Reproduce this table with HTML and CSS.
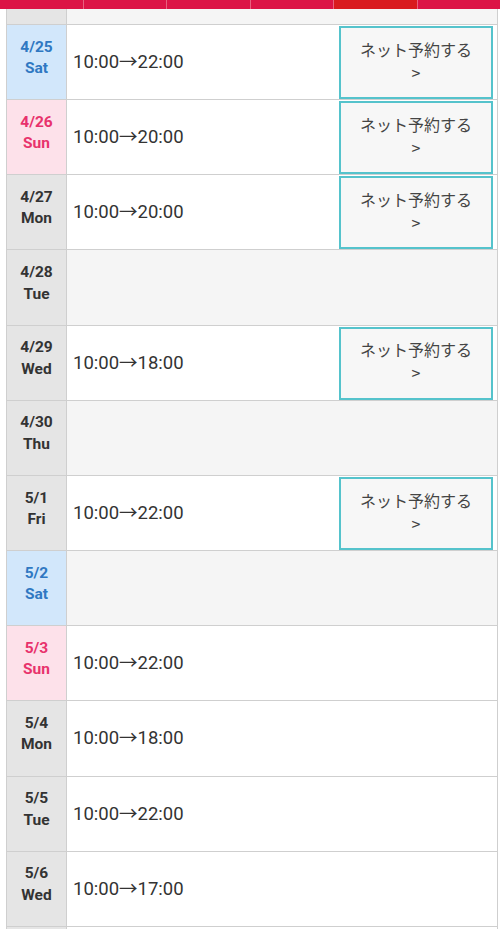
FILE: index.html
```html
<!DOCTYPE html>
<html lang="ja">
<head>
<meta charset="utf-8">
<title>営業日カレンダー</title>
<link rel="stylesheet" href="styles.css">
</head>
<body>
<div class="tabs">
  <span class="tab"></span>
  <span class="tab"></span>
  <span class="tab"></span>
  <span class="tab"></span>
  <span class="tab active"></span>
  <span class="tab"></span>
</div>
<div class="schedule">
  <div class="row partial closed">
    <div class="date wd"></div>
    <div class="body"></div>
  </div>
  <div class="row">
    <div class="date sat">4/25<br>Sat</div>
    <div class="body"><span class="time">10:00→22:00</span><a class="reserve">ネット予約する<br>&gt;</a></div>
  </div>
  <div class="row">
    <div class="date sun">4/26<br>Sun</div>
    <div class="body"><span class="time">10:00→20:00</span><a class="reserve">ネット予約する<br>&gt;</a></div>
  </div>
  <div class="row">
    <div class="date wd">4/27<br>Mon</div>
    <div class="body"><span class="time">10:00→20:00</span><a class="reserve">ネット予約する<br>&gt;</a></div>
  </div>
  <div class="row closed">
    <div class="date wd">4/28<br>Tue</div>
    <div class="body"></div>
  </div>
  <div class="row">
    <div class="date wd">4/29<br>Wed</div>
    <div class="body"><span class="time">10:00→18:00</span><a class="reserve">ネット予約する<br>&gt;</a></div>
  </div>
  <div class="row closed">
    <div class="date wd">4/30<br>Thu</div>
    <div class="body"></div>
  </div>
  <div class="row">
    <div class="date wd">5/1<br>Fri</div>
    <div class="body"><span class="time">10:00→22:00</span><a class="reserve">ネット予約する<br>&gt;</a></div>
  </div>
  <div class="row closed">
    <div class="date sat">5/2<br>Sat</div>
    <div class="body"></div>
  </div>
  <div class="row">
    <div class="date sun">5/3<br>Sun</div>
    <div class="body"><span class="time">10:00→22:00</span></div>
  </div>
  <div class="row">
    <div class="date wd">5/4<br>Mon</div>
    <div class="body"><span class="time">10:00→18:00</span></div>
  </div>
  <div class="row">
    <div class="date wd">5/5<br>Tue</div>
    <div class="body"><span class="time">10:00→22:00</span></div>
  </div>
  <div class="row">
    <div class="date wd">5/6<br>Wed</div>
    <div class="body"><span class="time">10:00→17:00</span></div>
  </div>
  <div class="row">
    <div class="date wd"></div>
    <div class="body"></div>
  </div>
</div>
</body>
</html>
```
FILE: styles.css
```css
html, body {
  margin: 0;
  padding: 0;
  background: #ffffff;
}
body {
  font-family: Roboto, "Noto Sans CJK JP", "Noto Sans", sans-serif;
  color: #333333;
  overflow: hidden;
  height: 929px;
}
.tabs {
  display: flex;
  height: 9px;
  background: #dc1446;
}
.tab {
  flex: 1;
  background: #dc1446;
  border-left: 1px solid #e8607e;
}
.tab:first-child {
  border-left: none;
}
.tab.active {
  background: #d91b1f;
}
.schedule {
  margin: 0 2px 0 6px;
  border-left: 1px solid #cfcfcf;
  border-right: 1px solid #cfcfcf;
}
.row {
  display: flex;
  box-sizing: border-box;
  height: 75.17px;
  border-bottom: 1px solid #cfcfcf;
}
.row.partial {
  height: 16px;
}
.date {
  box-sizing: border-box;
  width: 60px;
  flex: none;
  border-right: 1px solid #cfcfcf;
  display: flex;
  align-items: center;
  justify-content: center;
  text-align: center;
  font-weight: 700;
  font-size: 15.5px;
  line-height: 21.5px;
  padding-bottom: 8px;
}
.date.wd {
  background: #e5e5e5;
  color: #333333;
}
.date.sat {
  background: #d2e7fb;
  color: #2f78c2;
}
.date.sun {
  background: #fde1ea;
  color: #e8326c;
}
.body {
  flex: 1;
  display: flex;
  align-items: center;
  justify-content: space-between;
  background: #ffffff;
  padding-left: 6px;
}
.row.closed .body {
  background: #f5f5f5;
}
.time {
  font-size: 18.5px;
  color: #333333;
  padding-bottom: 4px;
}
.reserve {
  align-self: stretch;
  box-sizing: border-box;
  width: 154px;
  margin: 1px 4px 0 0;
  padding-bottom: 4px;
  border: 2px solid #55c3cc;
  background: #f7f7f7;
  display: flex;
  align-items: center;
  justify-content: center;
  text-align: center;
  font-family: "Noto Sans CJK JP", sans-serif;
  font-size: 16px;
  line-height: 23px;
  color: #444444;
  text-decoration: none;
}
```
